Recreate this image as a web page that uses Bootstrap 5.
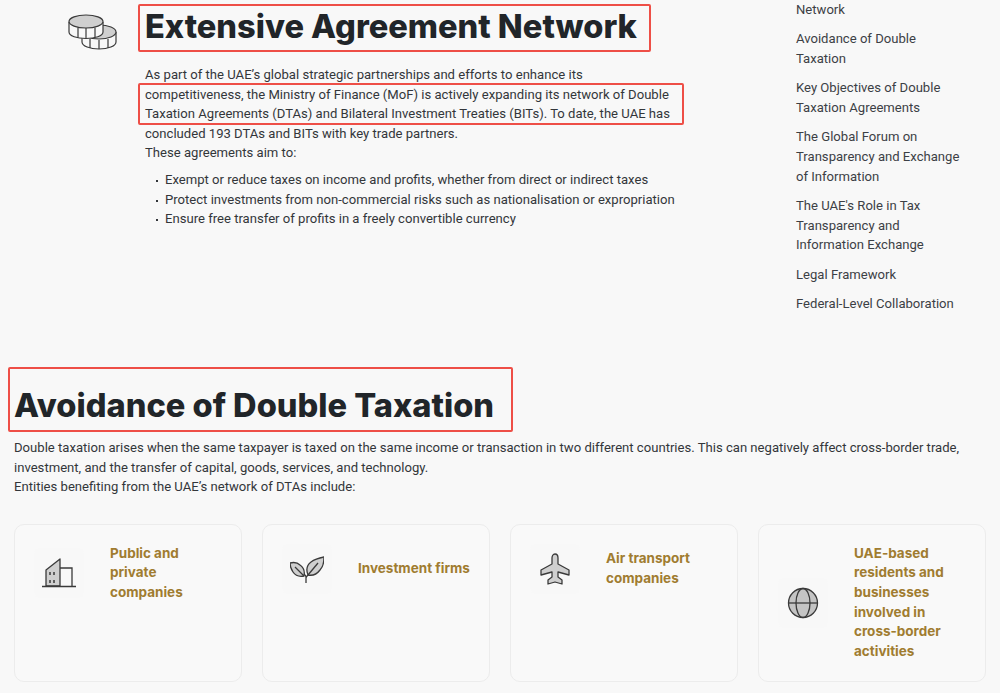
<!DOCTYPE html>
<html lang="en">
<head>
    <meta charset="UTF-8">
    <meta name="viewport" content="width=device-width, initial-scale=1.0">
    <title>Extensive Agreement Network</title>
    <link href="https://cdn.jsdelivr.net/npm/bootstrap@5.3.0/dist/css/bootstrap.min.css" rel="stylesheet">
    <style>
        body {
            background: #f8f8f8;
            color: #33363a;
            font-family: "Roboto", "Liberation Sans", sans-serif;
            font-size: 13.1px;
            line-height: 19.6px;
            overflow: hidden;
        }
        .page-wrap { padding: 0 14px; }
        .top-area { height: 333px; }
        .coin-col { width: 131px; padding: 14px 0 0 54px; flex: none; }
        .main-col { width: 574px; flex: none; }
        .side-col { margin-left: 77px; width: 180px; }
        .red-box { border: 2px solid #ee4f47; border-radius: 2px; }
        .big-title {
            font-family: "Inter", "Liberation Sans", sans-serif;
            font-size: 32.6px;
            font-weight: 800;
            line-height: 40px;
            color: #212529;
            margin: 0;
        }
        .title-one { display: inline-block; margin: 4px 0 0 -7px; padding: 0 12px 4px 5px; }
        .title-two { display: inline-block; margin: 34px 0 6px -6px; padding: 16px 17px 5px 4px; }
        .intro-text { position: relative; margin: 13px 0 0; }
        .mark-lines {
            position: absolute;
            left: -7px;
            top: 18px;
            width: 546px;
            height: 42px;
            pointer-events: none;
        }
        .dot-list { list-style: none; padding: 0 0 0 20px; margin: 7px 0 0; }
        .dot-list li { position: relative; }
        .dot-list li::before {
            content: "";
            position: absolute;
            left: -9px;
            top: 10px;
            width: 2px;
            height: 2px;
            background: #33363a;
        }
        .side-link { display: block; color: #3c4045; text-decoration: none; margin-bottom: 9.8px; }
        .org-grid { display: grid; grid-template-columns: repeat(4, 228px); gap: 20px; margin-top: 27px; }
        .org-card {
            height: 158px;
            background: #f9f9f9;
            border: 1px solid #ececec;
            border-radius: 10px;
            padding: 19px;
        }
        .org-row { display: flex; align-items: center; gap: 26px; }
        .icon-tile {
            width: 50px;
            height: 50px;
            flex: none;
            background: #f8f8f8;
            border-radius: 6px;
            display: flex;
            align-items: center;
            justify-content: center;
        }
        .org-name {
            font-family: "Inter", "Liberation Sans", sans-serif;
            font-size: 13.5px;
            font-weight: 700;
            color: #a07c30;
        }
    </style>
</head>
<body>
    <div class="page-wrap">
        <section class="top-area d-flex">
            <div class="coin-col">
                <svg class="d-block" width="50" height="36" viewBox="0 0 50 36" fill="none" stroke="#3a3a3a" stroke-width="1.2">
                    <path d="M14 18v10c0 4 8 7 17 7s17-3 17-7V18" />
                    <ellipse cx="31" cy="18" rx="17" ry="7" fill="#cfcfcf" />
                    <path d="M22 25v9M31 26v9M40 25v9" />
                    <path d="M1 8v10c0 4 8 6.500 17 6.500s17-2.500 17-6.500V8" fill="#f8f8f8" />
                    <ellipse cx="18" cy="7.500" rx="17" ry="6.500" fill="#cfcfcf" />
                    <path d="M10 13.500v10M18 14v10.500M27 13.500v10" />
                </svg>
            </div>
            <div class="main-col">
                <h2 class="big-title title-one red-box">Extensive Agreement Network</h2>
                <div class="intro-text">
                    As part of the UAE’s global strategic partnerships and efforts to enhance its<br>
                    competitiveness, the Ministry of Finance (MoF) is actively expanding its network of Double<br>
                    Taxation Agreements (DTAs) and Bilateral Investment Treaties (BITs). To date, the UAE has<br>
                    concluded 193 DTAs and BITs with key trade partners.<br>
                    These agreements aim to:
                    <div class="mark-lines red-box"></div>
                </div>
                <ul class="dot-list">
                    <li>Exempt or reduce taxes on income and profits, whether from direct or indirect taxes</li>
                    <li>Protect investments from non-commercial risks such as nationalisation or expropriation</li>
                    <li>Ensure free transfer of profits in a freely convertible currency</li>
                </ul>
            </div>
            <nav class="side-col">
                <a class="side-link" href="#">Network</a>
                <a class="side-link" href="#">Avoidance of Double<br>Taxation</a>
                <a class="side-link" href="#">Key Objectives of Double<br>Taxation Agreements</a>
                <a class="side-link" href="#">The Global Forum on<br>Transparency and Exchange<br>of Information</a>
                <a class="side-link" href="#">The UAE's Role in Tax<br>Transparency and<br>Information Exchange</a>
                <a class="side-link" href="#">Legal Framework</a>
                <a class="side-link" href="#">Federal-Level Collaboration</a>
            </nav>
        </section>

        <h2 class="big-title title-two red-box">Avoidance of Double Taxation</h2>
        <p class="mb-0">
            Double taxation arises when the same taxpayer is taxed on the same income or transaction in two different countries. This can negatively affect cross-border trade,<br>
            investment, and the transfer of capital, goods, services, and technology.<br>
            Entities benefiting from the UAE’s network of DTAs include:
        </p>

        <div class="org-grid">
            <div class="org-card">
                <div class="org-row">
                    <div class="icon-tile">
                        <svg width="34" height="34" viewBox="0 0 34 34" fill="none" stroke="#3a3a3a" stroke-width="1.3">
                            <path d="M4 30V14L18 3v27z" fill="#cfcfcf" stroke-linejoin="round" />
                            <path d="M18 12h12v18" />
                            <path d="M0 30.500h34" />
                            <path d="M8 16v3M12 16v3M8 24v3M12 24v3" stroke-width="1.500" />
                        </svg>
                    </div>
                    <div class="org-name">Public and<br>private<br>companies</div>
                </div>
            </div>
            <div class="org-card">
                <div class="org-row">
                    <div class="icon-tile">
                        <svg width="34" height="34" viewBox="0 0 34 34" fill="none" stroke="#3a3a3a" stroke-width="1.3">
                            <path d="M18 23c-2-5-1-10 3-13 4-3 8-4 13-5 0 5-1 10-4 13-3 4-7 6-12 5z" fill="#cfcfcf" stroke-linejoin="round" />
                            <path d="M18 23l10-12" />
                            <path d="M14 24c-5 1-9-1-11-4-2-3-3-6-3-9 4-1 8 0 10 2 3 2 5 6 4 11z" fill="#cfcfcf" stroke-linejoin="round" />
                            <path d="M14 24l-9-9" />
                            <path d="M16 31v-6c0-1-.5-2-2-3M16 26c0-1 1-2 2-3" />
                        </svg>
                    </div>
                    <div class="org-name text-nowrap">Investment firms</div>
                </div>
            </div>
            <div class="org-card">
                <div class="org-row">
                    <div class="icon-tile">
                        <svg width="34" height="34" viewBox="0 0 34 34" fill="#cfcfcf" stroke="#3a3a3a" stroke-width="1.3">
                            <path d="M17 2c2 0 3 2 3 4v6l11 6v5l-11-3v5l4 3v4l-7-2-7 2v-4l4-3v-5L3 23v-5l11-6V6c0-2 1-4 3-4z" stroke-linejoin="round" />
                        </svg>
                    </div>
                    <div class="org-name">Air transport<br>companies</div>
                </div>
            </div>
            <div class="org-card">
                <div class="org-row">
                    <div class="icon-tile">
                        <svg width="32" height="32" viewBox="0 0 32 32" fill="none" stroke="#3a3a3a" stroke-width="1.3">
                            <circle cx="16" cy="16" r="14.500" fill="#c4c4c4" />
                            <ellipse cx="16" cy="16" rx="7" ry="14.500" />
                            <path d="M1.500 16h29" />
                        </svg>
                    </div>
                    <div class="org-name">UAE-based<br>residents and<br>businesses<br>involved in<br>cross-border<br>activities</div>
                </div>
            </div>
        </div>
    </div>
    <script src="https://cdn.jsdelivr.net/npm/bootstrap@5.3.0/dist/js/bootstrap.bundle.min.js"></script>
</body>
</html>
